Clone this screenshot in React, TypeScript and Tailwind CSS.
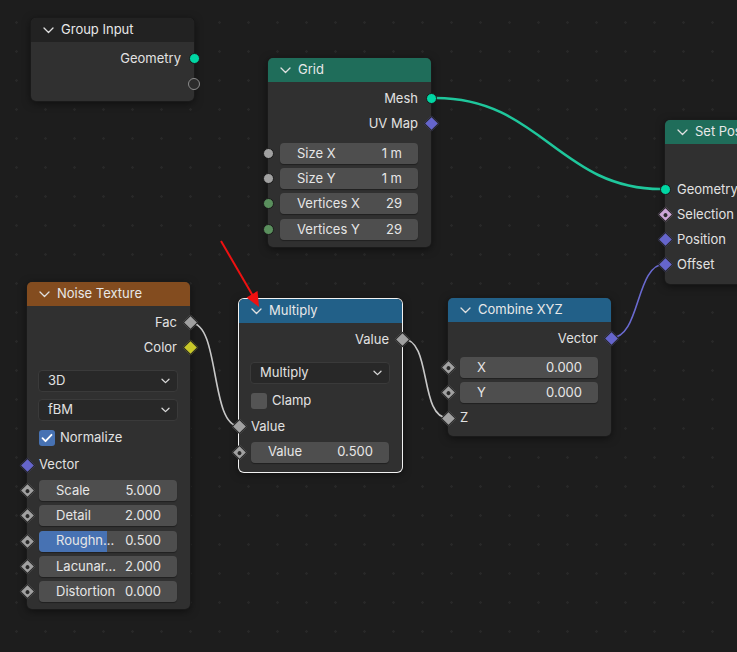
import React from "react";

const FONT = { fontFamily: "Inter, 'Noto Sans', 'DejaVu Sans', sans-serif" };

type Kind =
  | "geo"
  | "empty"
  | "floatC"
  | "intC"
  | "float"
  | "floatDot"
  | "vector"
  | "color"
  | "boolDot";

function Socket({ side, kind }: { side: "l" | "r"; kind: Kind }) {
  const pos = side === "l" ? "left-[-8px]" : "right-[-8px]";
  const base = `absolute ${pos} top-1/2 -translate-y-1/2 w-[16px] h-[16px] flex items-center justify-center`;
  if (kind === "geo")
    return (
      <div className={base}>
        <div className="w-[11px] h-[11px] rounded-full bg-[#00d6a3] border border-[#1a1a1a]" />
      </div>
    );
  if (kind === "empty")
    return (
      <div className={base}>
        <div className="w-[12px] h-[12px] rounded-full bg-[#2b2b2b] border-[1.5px] border-[#8c8c8c]" />
      </div>
    );
  if (kind === "floatC")
    return (
      <div className={base}>
        <div className="w-[11px] h-[11px] rounded-full bg-[#a1a1a1] border border-[#1a1a1a]" />
      </div>
    );
  if (kind === "intC")
    return (
      <div className={base}>
        <div className="w-[11px] h-[11px] rounded-full bg-[#5a8f5d] border border-[#1a1a1a]" />
      </div>
    );
  const color =
    kind === "vector"
      ? "bg-[#6565cc]"
      : kind === "color"
      ? "bg-[#c7c729]"
      : kind === "boolDot"
      ? "bg-[#cca6d6]"
      : "bg-[#a1a1a1]";
  const dot = kind === "floatDot" || kind === "boolDot";
  return (
    <div className={base}>
      <div className={`w-[11px] h-[11px] shrink-0 rotate-45 ${color} border border-[#262626] flex items-center justify-center`}>
        {dot && <div className="w-[4px] h-[4px] rounded-full bg-[#2a2a2a]" />}
      </div>
    </div>
  );
}

function Chevron() {
  return (
    <svg width="11" height="7" viewBox="0 0 11 7">
      <path d="M1 1 L5.5 5.5 L10 1" fill="none" stroke="#e0e0e0" strokeWidth="1.3" strokeLinecap="round" strokeLinejoin="round" />
    </svg>
  );
}

function SmallChevron() {
  return (
    <svg width="9" height="6" viewBox="0 0 9 6">
      <path d="M1 1.2 L4.5 4.6 L8 1.2" fill="none" stroke="#d8d8d8" strokeWidth="1.3" strokeLinecap="round" strokeLinejoin="round" />
    </svg>
  );
}

function Node({
  x,
  y,
  title,
  header,
  selected,
  children,
  pb,
}: {
  x: number;
  y: number;
  title: string;
  header: string;
  selected?: boolean;
  children: React.ReactNode;
  pb: string;
}) {
  return (
    <div
      className={`absolute w-[163px] rounded-[5px] bg-[#303030] shadow-[0_2px_8px_rgba(0,0,0,0.55)] ${
        selected ? "ring-1 ring-[#f2f2f2]" : "ring-1 ring-[#1a1a1a]"
      }`}
      style={{ left: x, top: y }}
    >
      <div className={`h-[24px] rounded-t-[5px] ${header} flex items-center pl-[12px] gap-[7px]`}>
        <Chevron />
        <span className="text-[13px] text-[#e8e8e8] whitespace-nowrap">{title}</span>
      </div>
      <div className={`pt-[4px] ${pb} flex flex-col`}>{children}</div>
    </div>
  );
}

function Out({ label, kind }: { label: string; kind: Kind }) {
  return (
    <div className="relative h-[25px] flex items-center justify-end pr-[13px] text-[13px] text-[#e2e2e2]">
      {label}
      <Socket side="r" kind={kind} />
    </div>
  );
}

function In({ label, kind, h = "h-[25px]" }: { label: string; kind: Kind; h?: string }) {
  return (
    <div className={`relative ${h} flex items-center pl-[12px] text-[13px] text-[#e2e2e2]`}>
      {label}
      <Socket side="l" kind={kind} />
    </div>
  );
}

function FieldRow({
  label,
  value,
  kind,
  fill,
  h = "h-[25px]",
}: {
  label: string;
  value: string;
  kind?: Kind;
  fill?: boolean;
  h?: string;
}) {
  return (
    <div className={`relative ${h} flex items-center pl-[12px] pr-[13px]`}>
      {kind && <Socket side="l" kind={kind} />}
      <div className="relative flex-1 h-[21px] rounded-[4px] bg-[#4e4e4e] overflow-hidden flex items-center justify-between pl-[17px] pr-[16px] text-[13px] text-[#e6e6e6] shadow-[0_1px_1px_rgba(0,0,0,0.35)]">
        {fill && <div className="absolute inset-y-0 left-0 w-[49%] bg-[#4772b3]" />}
        <span className="relative whitespace-pre">{label}</span>
        <span className="relative whitespace-pre">{value}</span>
      </div>
    </div>
  );
}

function Dropdown({ label }: { label: string }) {
  return (
    <div className="h-[29px] flex items-center pl-[11px] pr-[12px]">
      <div className="flex-1 h-[22px] rounded-[4px] bg-[#282828] border border-[#3a3a3a] flex items-center justify-between pl-[9px] pr-[7px] text-[13px] text-[#e2e2e2]">
        <span>{label}</span>
        <SmallChevron />
      </div>
    </div>
  );
}

function Check({ label, checked, h = "h-[27px]" }: { label: string; checked?: boolean; h?: string }) {
  return (
    <div className={`${h} flex items-center pl-[12px] gap-[5px] text-[13px] text-[#e2e2e2]`}>
      <div
        className={`w-[16px] h-[16px] rounded-[3px] flex items-center justify-center ${
          checked ? "bg-[#4772b3]" : "bg-[#545454]"
        }`}
      >
        {checked && (
          <svg width="12" height="10" viewBox="0 0 12 10">
            <path d="M1.5 5.2 L4.5 8.2 L10.5 1.8" fill="none" stroke="#ffffff" strokeWidth="1.8" strokeLinecap="round" strokeLinejoin="round" />
          </svg>
        )}
      </div>
      <span>{label}</span>
    </div>
  );
}

export default function App() {
  return (
    <div
      className="relative w-[737px] h-[652px] overflow-hidden bg-[#1d1d1d] bg-[radial-gradient(circle,#282828_1px,transparent_1.5px)] bg-[size:29px_29px] bg-[position:2px_8px]"
      style={FONT}
    >
      {/* links */}
      <svg className="absolute inset-0" width="737" height="652">
        <path d="M436 98 C 540 98, 560 189, 661 189" fill="none" stroke="#1fc79c" strokeWidth="2.6" />
        <path d="M191 323 C 220 323, 210 426, 239 426" fill="none" stroke="#c8c8c8" strokeWidth="1.6" />
        <path d="M403 339 C 432 339, 419 418, 448 418" fill="none" stroke="#c8c8c8" strokeWidth="1.6" />
        <path d="M611 338 C 641 338, 635 264, 665 264" fill="none" stroke="#6a6ad0" strokeWidth="1.6" />
      </svg>

      <Node x={31} y={18} title="Group Input" header="bg-[#222222]" pb="pb-[5px]">
        <Out label="Geometry" kind="geo" />
        <Out label="" kind="empty" />
      </Node>

      <Node x={268} y={58} title="Grid" header="bg-[#1f6d5a]" pb="pb-[5px]">
        <Out label="Mesh" kind="geo" />
        <Out label="UV Map" kind="vector" />
        <div className="h-[5px]" />
        <FieldRow label="Size X" value="1 m" kind="floatC" />
        <FieldRow label="Size Y" value="1 m" kind="floatC" />
        <FieldRow label="Vertices X" value="29" kind="intC" h="h-[25.5px]" />
        <FieldRow label="Vertices Y" value="29" kind="intC" h="h-[25.5px]" />
      </Node>

      <Node x={665} y={120} title="Set Position" header="bg-[#1f6d5a]" pb="pb-[7px]">
        <div className="h-[25px]" />
        <div className="h-[4px]" />
        <In label="Geometry" kind="geo" />
        <In label="Selection" kind="boolDot" />
        <In label="Position" kind="vector" />
        <In label="Offset" kind="vector" />
      </Node>

      <Node x={27} y={282} title="Noise Texture" header="bg-[#834c1f]" pb="pb-[5px]">
        <Out label="Fac" kind="float" />
        <Out label="Color" kind="color" />
        <div className="h-[6px]" />
        <Dropdown label="3D" />
        <Dropdown label="fBM" />
        <Check label="Normalize" checked h="h-[28px]" />
        <In label="Vector" kind="vector" h="h-[26px]" />
        <FieldRow label="Scale" value="5.000" kind="floatDot" h="h-[25.25px]" />
        <FieldRow label="Detail" value="2.000" kind="floatDot" h="h-[25.25px]" />
        <FieldRow label="Roughn..." value="0.500" kind="floatDot" fill h="h-[25.25px]" />
        <FieldRow label="Lacunar..." value="2.000" kind="floatDot" h="h-[25.25px]" />
        <FieldRow label="Distortion" value="0.000" kind="floatDot" h="h-[25.25px]" />
      </Node>

      <Node x={239} y={299} title="Multiply" header="bg-[#226088]" selected pb="pb-[7px]">
        <Out label="Value" kind="float" />
        <div className="h-[6px]" />
        <Dropdown label="Multiply" />
        <Check label="Clamp" />
        <In label="Value" kind="float" />
        <FieldRow label="Value" value="0.500" kind="floatDot" h="h-[26px]" />
      </Node>

      <Node x={448} y={298} title="Combine XYZ" header="bg-[#226088]" pb="pb-[5px]">
        <Out label="Vector" kind="vector" />
        <div className="h-[4px]" />
        <FieldRow label="X" value="0.000" kind="floatDot" />
        <FieldRow label="Y" value="0.000" kind="floatDot" h="h-[25.5px]" />
        <In label="Z" kind="float" />
      </Node>

      {/* red annotation arrow */}
      <svg className="absolute inset-0 pointer-events-none" width="737" height="652">
        <line x1="221" y1="241" x2="253" y2="296" stroke="#ee1111" strokeWidth="2" />
        <polygon points="259,307 246.5,297.5 257.5,291" fill="#ee1111" />
      </svg>
    </div>
  );
}
